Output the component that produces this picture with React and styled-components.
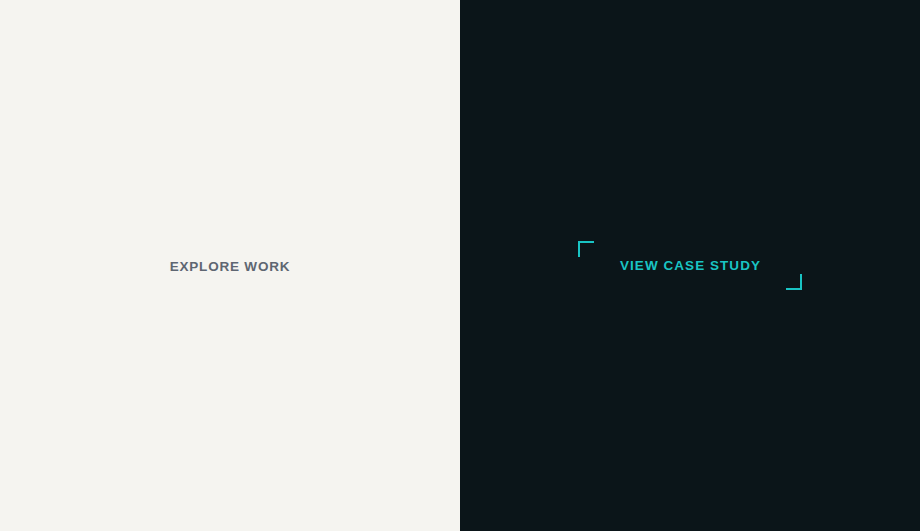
import React from "react";
import styled, { createGlobalStyle } from "styled-components";

const Global = createGlobalStyle`
  html, body { margin: 0; padding: 0; }
  body { font-family: "Liberation Sans", Arial, sans-serif; }
`;

const Split = styled.div`
  display: grid;
  grid-template-columns: 1fr 1fr;
  width: 920px;
  height: 531px;
`;

const Panel = styled.section`
  display: flex;
  align-items: center;
  justify-content: center;
  background: ${(p) => (p.$dark ? "#0b1519" : "#f5f4f0")};
`;

const PlainLink = styled.a`
  font-size: 13.5px;
  font-weight: 700;
  letter-spacing: 0.8px;
  text-transform: uppercase;
  color: #5e6672;
  text-decoration: none;
  line-height: 17px;
  margin-top: 1px;
`;

const FramedLink = styled.a`
  position: relative;
  display: inline-block;
  padding: 16px 41px 16px 42px;
  font-size: 13.5px;
  font-weight: 700;
  letter-spacing: 1.05px;
  text-transform: uppercase;
  color: #19c4c4;
  text-decoration: none;
  line-height: 17px;

  &::before,
  &::after {
    content: "";
    position: absolute;
    width: 14px;
    height: 14px;
    border-color: #19c4c4;
    border-style: solid;
  }
  &::before {
    top: 0;
    left: 0;
    border-width: 2px 0 0 2px;
  }
  &::after {
    bottom: 0;
    right: 0;
    border-width: 0 2px 2px 0;
  }
`;

export default function App() {
  return (
    <>
      <Global />
      <Split>
        <Panel>
          <PlainLink href="#">Explore Work</PlainLink>
        </Panel>
        <Panel $dark>
          <FramedLink href="#">View Case Study</FramedLink>
        </Panel>
      </Split>
    </>
  );
}
